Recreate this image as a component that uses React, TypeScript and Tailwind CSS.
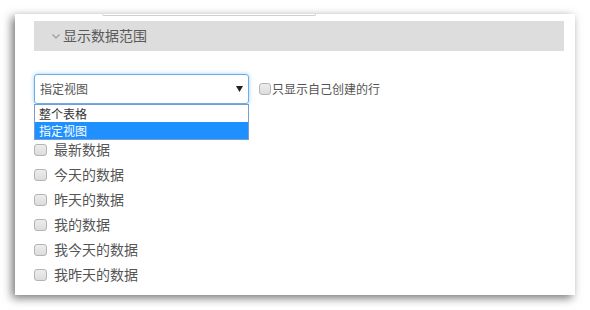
import React from "react";

const font = { fontFamily: '"Microsoft YaHei", "Noto Sans CJK SC", "Noto Sans", sans-serif' };

function Box({ className = "" }: { className?: string }) {
  return (
    <span
      className={
        "inline-block shrink-0 rounded-[3px] border border-[#b4b4b4] bg-gradient-to-b from-[#ededed] to-[#dcdcdc] " +
        className
      }
    />
  );
}

const items = ["最新数据", "今天的数据", "昨天的数据", "我的数据", "我今天的数据", "我昨天的数据"];

export default function App() {
  return (
    <div className="w-[590px] h-[310px] bg-white pt-[14px] pl-[15px] overflow-hidden" style={font}>
      <div className="relative w-[560px] h-[281px] bg-white shadow-[-3px_3px_9px_rgba(0,0,0,0.55)] pl-[19px] pr-[11px]">
        <div className="ml-[68px] w-[214px] h-[2px] border-x border-b border-[#cfcfcf] rounded-b-[2px]" />
        <div className="mt-[5px] h-[30px] bg-[#dddddd] flex items-center pl-[18px] text-[14px] text-[#5a5a5a]">
          <svg width="8" height="5" viewBox="0 0 8 5" className="mr-[3px] mt-[1px]">
            <path d="M0.5 0.5 L4 4 L7.5 0.5" fill="none" stroke="#999" strokeWidth="1.1" />
          </svg>
          <span className="-mt-[1px]">显示数据范围</span>
        </div>
        <div className="mt-[23px] flex items-center">
          <div className="relative w-[215px] h-[30px] rounded-[3px] border border-[#66afe9] shadow-[0_0_4px_rgba(102,175,233,0.6)] flex items-center pl-[5px] text-[12px] text-[#555]">
            <span>指定视图</span>
            <svg width="7" height="6" viewBox="0 0 7 6" className="absolute right-[5px] top-[11px]">
              <path d="M0 0 L7 0 L3.5 6 Z" fill="#222" />
            </svg>
            <div className="absolute left-[-1px] top-[29px] w-[215px] border border-[#7a9cd3] bg-white text-[12px] leading-[17px] z-10">
              <div className="pl-[4px] h-[17px] text-[#333]">整个表格</div>
              <div className="pl-[4px] h-[17px] bg-[#1e90ff] text-white">指定视图</div>
            </div>
          </div>
          <label className="ml-[10px] flex items-center text-[12px] text-[#555]">
            <Box className="w-[12px] h-[12px] mr-[1px] -mt-[1px]" />
            <span>只显示自己创建的行</span>
          </label>
        </div>
        <div className="mt-[33px] flex flex-col">
          {items.map((t) => (
            <div key={t} className="flex items-center h-[25px] text-[14px] text-[#555]">
              <Box className="w-[13px] h-[12px] mr-[7px]" />
              <span>{t}</span>
            </div>
          ))}
        </div>
      </div>
    </div>
  );
}
